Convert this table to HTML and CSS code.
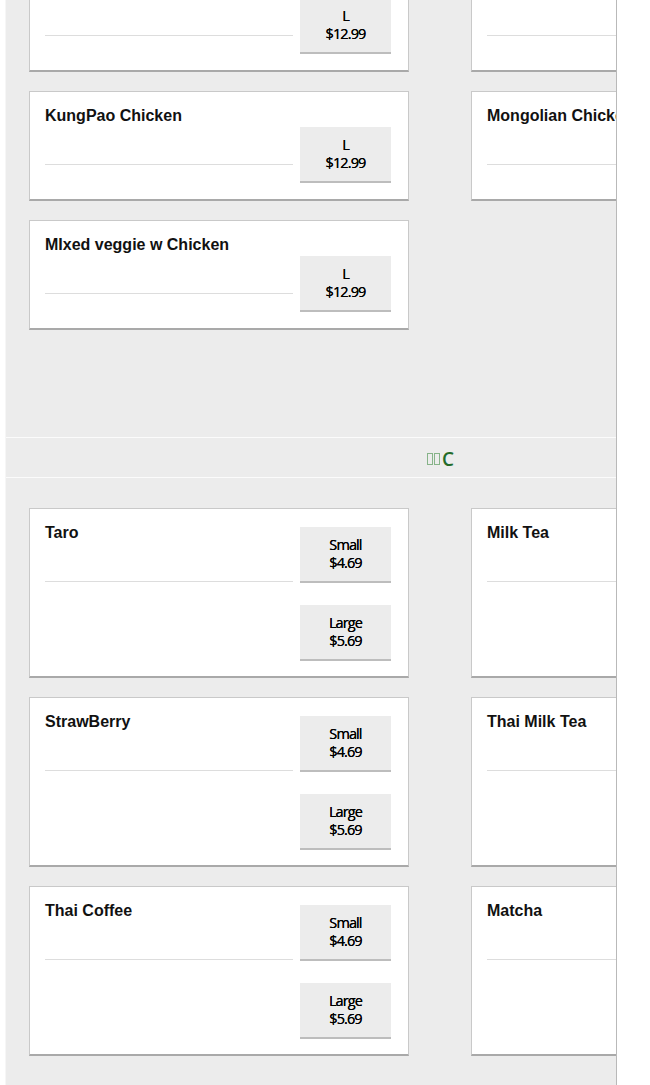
FILE: index.html
```html
<!DOCTYPE html>
<html lang="en">
<head>
    <meta charset="UTF-8">
    <meta name="viewport" content="width=device-width, initial-scale=1.0">
    <title>Menu</title>
    <link rel="stylesheet" href="styles.css">
</head>
<body>
    <div class="menu">
        <section class="section food">
            <div class="grid">
                <div class="card">
                    <div class="info">
                        <div class="name">Orange Chicken</div>
                        <div class="rule"></div>
                    </div>
                    <div class="prices">
                        <div class="price">L<br>$12.99</div>
                    </div>
                </div>
                <div class="card">
                    <div class="info">
                        <div class="name">Sesame Chicken</div>
                        <div class="rule"></div>
                    </div>
                    <div class="prices">
                        <div class="price">L<br>$12.99</div>
                    </div>
                </div>
                <div class="card">
                    <div class="info">
                        <div class="name">KungPao Chicken</div>
                        <div class="rule"></div>
                    </div>
                    <div class="prices">
                        <div class="price">L<br>$12.99</div>
                    </div>
                </div>
                <div class="card">
                    <div class="info">
                        <div class="name">Mongolian Chicken</div>
                        <div class="rule"></div>
                    </div>
                    <div class="prices">
                        <div class="price">L<br>$12.99</div>
                    </div>
                </div>
                <div class="card">
                    <div class="info">
                        <div class="name">MIxed veggie w Chicken</div>
                        <div class="rule"></div>
                    </div>
                    <div class="prices">
                        <div class="price">L<br>$12.99</div>
                    </div>
                </div>
            </div>
        </section>

        <div class="divider">
            <div class="divider-title"><span class="tofu"></span><span class="tofu"></span>C</div>
        </div>

        <section class="section drinks">
            <div class="grid">
                <div class="card">
                    <div class="info">
                        <div class="name">Taro</div>
                        <div class="rule"></div>
                    </div>
                    <div class="prices">
                        <div class="price">Small<br>$4.69</div>
                        <div class="price">Large<br>$5.69</div>
                    </div>
                </div>
                <div class="card">
                    <div class="info">
                        <div class="name">Milk Tea</div>
                        <div class="rule"></div>
                    </div>
                    <div class="prices">
                        <div class="price">Small<br>$4.69</div>
                        <div class="price">Large<br>$5.69</div>
                    </div>
                </div>
                <div class="card">
                    <div class="info">
                        <div class="name">StrawBerry</div>
                        <div class="rule"></div>
                    </div>
                    <div class="prices">
                        <div class="price">Small<br>$4.69</div>
                        <div class="price">Large<br>$5.69</div>
                    </div>
                </div>
                <div class="card">
                    <div class="info">
                        <div class="name">Thai Milk Tea</div>
                        <div class="rule"></div>
                    </div>
                    <div class="prices">
                        <div class="price">Small<br>$4.69</div>
                        <div class="price">Large<br>$5.69</div>
                    </div>
                </div>
                <div class="card">
                    <div class="info">
                        <div class="name">Thai Coffee</div>
                        <div class="rule"></div>
                    </div>
                    <div class="prices">
                        <div class="price">Small<br>$4.69</div>
                        <div class="price">Large<br>$5.69</div>
                    </div>
                </div>
                <div class="card">
                    <div class="info">
                        <div class="name">Matcha</div>
                        <div class="rule"></div>
                    </div>
                    <div class="prices">
                        <div class="price">Small<br>$4.69</div>
                        <div class="price">Large<br>$5.69</div>
                    </div>
                </div>
            </div>
        </section>
    </div>
</body>
</html>
```

FILE: styles.css
```css
body {
    margin: 0;
    background-color: #ffffff;
    font-family: 'Liberation Sans', Arial, sans-serif;
    color: #111;
    overflow: hidden;
}
.menu {
    margin-left: 5px;
    width: 610px;
    height: 1085px;
    background-color: #ececec;
    border-left: 1px solid #f6f6f6;
    border-right: 1px solid #b9b9b9;
    overflow: hidden;
}
.grid {
    width: 822px;
    padding-left: 23px;
    display: grid;
    grid-template-columns: 380px 380px;
    column-gap: 62px;
    row-gap: 19px;
}
.section.food {
    margin-top: -38px;
    padding-bottom: 107px;
}
.section.drinks {
    padding-top: 30px;
}
.card {
    background-color: #ffffff;
    border: 1px solid #c9c9c9;
    border-bottom: 2px solid #a9a9a9;
    padding: 15px 17px 16px 15px;
    display: flex;
    align-items: flex-end;
    gap: 7px;
}
.drinks .card {
    padding-bottom: 15px;
}
.info {
    flex: 1;
    align-self: flex-start;
}
.name {
    font-size: 16px;
    line-height: 18px;
    font-weight: bold;
    white-space: nowrap;
}
.rule {
    margin-top: 39px;
    margin-bottom: 18px;
    border-top: 1px solid #dddddd;
}
.prices {
    width: 91px;
    display: flex;
    flex-direction: column;
    gap: 22px;
}
.drinks .prices {
    margin-top: 3px;
}
.price {
    height: 54px;
    background-color: #ececec;
    border-bottom: 2px solid #bdbdbd;
    display: flex;
    align-items: center;
    justify-content: center;
    text-align: center;
    font-family: 'Open Sans', sans-serif;
    font-size: 14.5px;
    line-height: 18px;
    letter-spacing: -0.9px;
    color: #000;
    text-shadow: 0 0 0.3px #000;
}
.divider {
    width: 869px;
    height: 39px;
    border-top: 1px solid #fbfbfb;
    border-bottom: 1px solid #fbfbfb;
    display: flex;
    align-items: center;
    justify-content: center;
}
.divider-title {
    padding-top: 3px;
    font-family: 'Open Sans', sans-serif;
    font-size: 19px;
    font-weight: 600;
    color: #236b29;
    display: flex;
    align-items: center;
}
.tofu {
    display: inline-block;
    width: 4px;
    height: 10px;
    margin-right: 1px;
    border: 1px solid #86b388;
}
.tofu + .tofu {
    margin-right: 2px;
}
```
